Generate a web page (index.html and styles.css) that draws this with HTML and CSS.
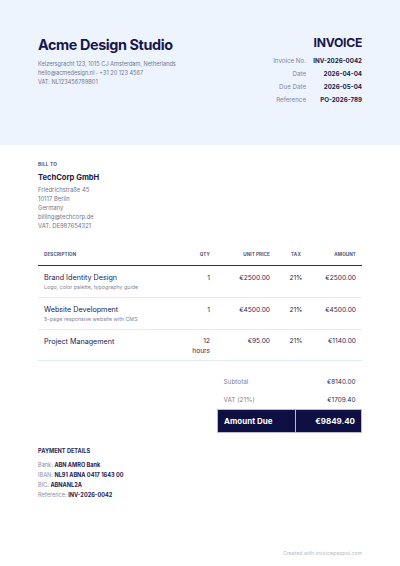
FILE: index.html
```html
<!DOCTYPE html>
<html>
<head>
<meta charset="utf-8">
<link rel="stylesheet" href="styles.css">
</head>
<body>
<div class="page">
  <header class="header">
    <div class="company">
      <h1 class="company-name">Acme Design Studio</h1>
      <div class="company-info">
        <div>Keizersgracht 123, 1015 CJ Amsterdam, Netherlands</div>
        <div>hello@acmedesign.nl · +31 20 123 4567</div>
        <div>VAT: NL123456789B01</div>
      </div>
    </div>
    <div class="doc">
      <div class="doc-title">INVOICE</div>
      <div class="meta">
        <span class="meta-label">Invoice No.</span><span class="meta-value">INV-2026-0042</span>
        <span class="meta-label">Date</span><span class="meta-value">2026-04-04</span>
        <span class="meta-label">Due Date</span><span class="meta-value">2026-05-04</span>
        <span class="meta-label">Reference</span><span class="meta-value">PO-2026-789</span>
      </div>
    </div>
  </header>

  <section class="content">
    <div class="billto">
      <div class="section-label">BILL TO</div>
      <div class="client-name">TechCorp GmbH</div>
      <div class="client-info">
        <div>Friedrichstraße 45</div>
        <div>10117 Berlin</div>
        <div>Germany</div>
        <div>billing@techcorp.de</div>
        <div>VAT: DE987654321</div>
      </div>
    </div>

    <table class="items">
      <thead>
        <tr>
          <th class="c-desc">DESCRIPTION</th>
          <th class="c-qty">QTY</th>
          <th class="c-price">UNIT PRICE</th>
          <th class="c-tax">TAX</th>
          <th class="c-amt">AMOUNT</th>
        </tr>
      </thead>
      <tbody>
        <tr>
          <td class="c-desc"><div class="item-name">Brand Identity Design</div><div class="item-sub">Logo, color palette, typography guide</div></td>
          <td class="c-qty">1</td>
          <td class="c-price">€2500.00</td>
          <td class="c-tax">21%</td>
          <td class="c-amt">€2500.00</td>
        </tr>
        <tr>
          <td class="c-desc"><div class="item-name">Website Development</div><div class="item-sub">5-page responsive website with CMS</div></td>
          <td class="c-qty">1</td>
          <td class="c-price">€4500.00</td>
          <td class="c-tax">21%</td>
          <td class="c-amt">€4500.00</td>
        </tr>
        <tr class="last">
          <td class="c-desc"><div class="item-name">Project Management</div></td>
          <td class="c-qty">12<br>hours</td>
          <td class="c-price">€95.00</td>
          <td class="c-tax">21%</td>
          <td class="c-amt">€1140.00</td>
        </tr>
      </tbody>
    </table>

    <div class="totals-wrap">
      <table class="totals">
        <tr><td class="t-label">Subtotal</td><td class="t-val">€8140.00</td></tr>
        <tr><td class="t-label">VAT (21%)</td><td class="t-val">€1709.40</td></tr>
        <tr class="due"><td class="t-label">Amount Due</td><td class="t-val">€9849.40</td></tr>
      </table>
    </div>

    <div class="payment">
      <div class="pay-title">PAYMENT DETAILS</div>
      <div class="pay-line">Bank: <b>ABN AMRO Bank</b></div>
      <div class="pay-line">IBAN: <b>NL91 ABNA 0417 1643 00</b></div>
      <div class="pay-line">BIC: <b>ABNANL2A</b></div>
      <div class="pay-line">Reference: <b>INV-2026-0042</b></div>
    </div>

    <div class="footer">Created with invoicepeppol.com</div>
  </section>
</div>
</body>
</html>
```

FILE: styles.css
```css
* { box-sizing: border-box; }
html, body { margin: 0; padding: 0; background: #fff; }
body {
  font-family: Inter, "Noto Sans", sans-serif;
  color: #1b1c4d;
  width: 400px;
}
.header {
  background: #eef4fe;
  height: 145px;
  padding: 34px 38px 0 38px;
  display: flex;
  justify-content: space-between;
  align-items: flex-start;
}
.company-name {
  margin: 0;
  font-size: 14.4px;
  font-weight: 700;
  letter-spacing: -0.4px;
  line-height: 22px;
  color: #16174a;
}
.company-info {
  margin-top: 4px;
  font-size: 5.6px;
  line-height: 9px;
  color: #72768f;
}
.doc { text-align: right; }
.doc-title {
  font-size: 12.2px;
  font-weight: 700;
  letter-spacing: -0.3px;
  line-height: 18px;
  color: #16174a;
}
.meta {
  margin-top: 2px;
  display: grid;
  grid-template-columns: auto 56px;
  font-size: 6.2px;
  line-height: 13px;
}
.meta-label { color: #7f8399; text-align: right; }
.meta-value { font-weight: 700; text-align: right; color: #1b1c4d; }

.content { padding: 0 38px; }
.billto { padding-top: 15px; }
.section-label {
  font-size: 4.8px;
  font-weight: 700;
  color: #51546e;
  letter-spacing: 0.2px;
  line-height: 8px;
}
.client-name {
  margin-top: 5px;
  font-size: 7.6px;
  font-weight: 700;
  line-height: 10px;
  color: #16174a;
}
.client-info {
  margin-top: 2px;
  font-size: 5.9px;
  line-height: 9px;
  color: #72768f;
}

.items {
  width: 100%;
  margin-top: 17px;
  border-collapse: collapse;
  font-size: 6.6px;
}
.items th {
  font-size: 4.6px;
  font-weight: 700;
  color: #51546e;
  letter-spacing: 0.1px;
  padding: 5px 6px 7px 6px;
  border-bottom: 1.5px solid #2c2d5e;
  line-height: 6px;
}
.items td {
  padding: 7px 6px 5px 6px;
  vertical-align: top;
  border-bottom: 1px solid #e2eaf8;
  line-height: 10px;
  color: #2a2b55;
}
.items .c-desc { text-align: left; }
.items .c-qty { text-align: right; width: 40px; padding-right: 4px; }
.items .c-price { text-align: right; width: 62px; }
.items .c-tax { text-align: center; width: 40px; }
.items .c-amt { text-align: right; width: 46px; }
.item-name { font-size: 7.2px; line-height: 10px; color: #1f2051; }
.item-sub { font-size: 5.3px; line-height: 9px; color: #7f8399; }
.items tr.last td { padding-bottom: 4px; line-height: 9.5px; }

.totals-wrap {
  display: flex;
  justify-content: flex-end;
  margin-top: 12px;
}
.totals {
  width: 145px;
  border-collapse: collapse;
  font-size: 6.4px;
}
.totals td { padding: 0 6px; height: 18px; }
.t-label { color: #7f8399; width: 78px; }
.t-val { text-align: right; color: #2a2b55; }
.due td {
  background: #0e0f42;
  color: #fff;
  font-weight: 700;
  font-size: 8px;
  height: 23px;
  border: 1px solid #b9bccb;
}

.payment { margin-top: 14px; }
.pay-title {
  font-size: 5.6px;
  font-weight: 700;
  color: #2a2b55;
  line-height: 8px;
  margin-bottom: 5px;
}
.pay-line {
  font-size: 5.6px;
  line-height: 10px;
  color: #8a8ea5;
}
.pay-line b { color: #1f2051; font-weight: 700; }

.footer {
  margin-top: 50px;
  text-align: right;
  font-size: 5.2px;
  line-height: 7px;
  color: #b8bac8;
}
```
